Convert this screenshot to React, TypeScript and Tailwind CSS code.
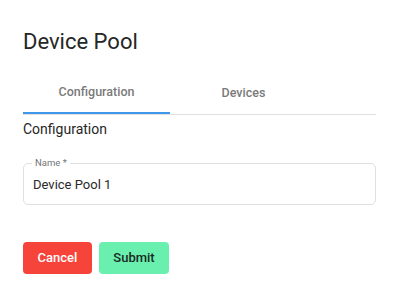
import React from "react";

export default function App() {
  return (
    <div className="w-[400px] h-[290px] bg-white px-[23px] pt-[27px]" style={{ fontFamily: "Roboto, 'Liberation Sans', sans-serif" }}>
      <h1 className="text-[22px] leading-[30px] text-[#262626] font-normal">Device Pool</h1>
      <div className="mt-[13px] flex border-b border-[#e0e0e0] w-[353px]">
        <div className="w-[147px] h-[44px] flex items-center justify-center pt-[3px] text-[12.5px] font-medium text-[#7a7a7a] border-b-2 border-[#3e97e8] -mb-px">
          Configuration
        </div>
        <div className="w-[147px] h-[44px] flex items-center justify-center pt-[3px] text-[12.5px] font-medium text-[#7a7a7a]">
          Devices
        </div>
      </div>
      <div className="mt-[4px] text-[14px] leading-[20px] text-[#262626]">Configuration</div>
      <div className="relative mt-[24px] w-[353px] h-[42px] rounded-[5px] border border-[#e0e0e0] flex items-center px-[9px]">
        <span className="absolute left-[8px] -top-[7px] bg-white px-[3px] text-[9.5px] leading-[12px] text-[#757575]">Name *</span>
        <span className="text-[13px] text-[#2a2a2a] pt-[1px]">Device Pool 1</span>
      </div>
      <div className="mt-[37px] flex gap-[7px]">
        <button className="w-[69px] h-[32px] rounded-[4px] bg-[#f6443a] text-white text-[13px] font-medium">Cancel</button>
        <button className="w-[70px] h-[32px] rounded-[4px] bg-[#69f0ae] text-[#1a2a22] text-[13px] font-medium">Submit</button>
      </div>
    </div>
  );
}
